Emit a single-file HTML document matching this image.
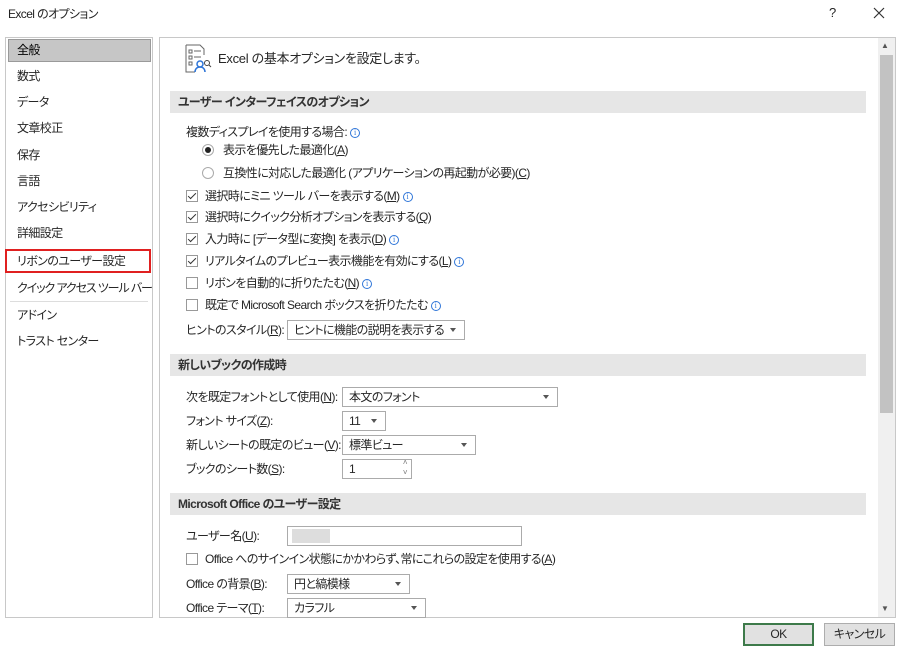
<!DOCTYPE html>
<html><head><meta charset="utf-8"><style>
*{margin:0;padding:0;box-sizing:border-box}
body{width:900px;height:651px;background:#fff;position:relative;overflow:hidden;font-family:"Liberation Sans","Noto Sans CJK JP",sans-serif;font-size:12px;color:#262626;font-feature-settings:"palt" 1;letter-spacing:-0.6px}
.a{position:absolute;white-space:nowrap;line-height:16px}
.box{position:absolute;border:1px solid #ababab;background:#fff}
.hdr{position:absolute;left:170px;width:696px;height:22px;background:#e6e6e6;font-weight:bold;font-size:12px;line-height:22px;padding-left:8px;color:#333}
.cb{position:absolute;width:12px;height:12px;border:1px solid #999;background:#fff}
.cb.c::after{content:"";position:absolute;left:3px;top:0px;width:3px;height:7px;border:solid #333;border-width:0 1.5px 1.5px 0;transform:rotate(45deg)}
.rd{position:absolute;width:12px;height:12px;border:1px solid #aaa;border-radius:50%}
.rd.c::after{content:"";position:absolute;left:2px;top:2px;width:6px;height:6px;border-radius:50%;background:#222}
.i{display:inline-block;width:10px;height:10px;border:1px solid #2e75d8;border-radius:50%;color:#2e75d8;font-size:8px;line-height:8px;text-align:center;margin-left:3px;vertical-align:1px;font-family:"Liberation Serif",serif;letter-spacing:0}
.sel{position:absolute;border:1px solid #ababab;background:#fff;height:20px;line-height:18px;padding-left:6px}
.sel::after{content:"";position:absolute;right:8px;top:7px;border:3.5px solid transparent;border-top:4px solid #555;border-bottom:0}
u{text-decoration:underline}
</style></head><body>
<div class="a" style="left:8px;top:6px;font-size:12px;color:#222">Excel のオプション</div>
<div class="a" style="left:829px;top:5px;font-size:13px">?</div>
<svg style="position:absolute;left:873px;top:7px" width="12" height="12"><path d="M1 1L11 11M11 1L1 11" stroke="#333" stroke-width="1.2"/></svg>

<div class="box" style="left:5px;top:37px;width:148px;height:581px;border-color:#c8c8c8"></div>
<div style="position:absolute;left:8px;top:39px;width:143px;height:23px;background:#c6c6c6;border:1px solid #9a9a9a"></div>
<div class="a" style="left:17px;top:42px;color:#000">全般</div>
<div class="a" style="left:17px;top:68px">数式</div>
<div class="a" style="left:17px;top:94px">データ</div>
<div class="a" style="left:17px;top:120px">文章校正</div>
<div class="a" style="left:17px;top:147px">保存</div>
<div class="a" style="left:17px;top:173px">言語</div>
<div class="a" style="left:17px;top:199px">アクセシビリティ</div>
<div class="a" style="left:17px;top:225px">詳細設定</div>
<div style="position:absolute;left:5px;top:249px;width:146px;height:24px;border:2px solid #e02020"></div>
<div class="a" style="left:17px;top:253px">リボンのユーザー設定</div>
<div class="a" style="left:17px;top:280px;letter-spacing:-1.1px">クイック アクセス ツール バー</div>
<div style="position:absolute;left:10px;top:301px;width:138px;height:1px;background:#ddd"></div>
<div class="a" style="left:17px;top:307px">アドイン</div>
<div class="a" style="left:17px;top:333px">トラスト センター</div>

<div class="box" style="left:159px;top:37px;width:737px;height:581px;border-color:#c8c8c8"></div>
<div style="position:absolute;left:878px;top:38px;width:17px;height:579px;background:#f0f0f0"></div>
<div style="position:absolute;left:880px;top:55px;width:13px;height:358px;background:#c2c2c2"></div>
<div class="a" style="left:881px;top:38px;font-size:8px;color:#555">▲</div>
<div class="a" style="left:881px;top:601px;font-size:8px;color:#555">▼</div>

<svg style="position:absolute;left:184px;top:44px" width="28" height="30" viewBox="0 0 28 30"><path d="M2 1h14l4 4v6M2 1v27h9" fill="none" stroke="#666"/><path d="M5 6h3v3H5zM5 12h3v3H5zM5 18h3v3H5z" fill="none" stroke="#666"/><path d="M10 7h7M10 13h7" stroke="#666"/><circle cx="16" cy="20" r="3" fill="none" stroke="#2e75d8" stroke-width="1.5"/><path d="M11 28c0-3 2-5 5-5s5 2 5 5" fill="none" stroke="#2e75d8" stroke-width="1.5"/><circle cx="23" cy="19" r="2.5" fill="none" stroke="#444"/><path d="M25 21l2 2" stroke="#444"/></svg>
<div class="a" style="left:218px;top:51px;font-size:13px;letter-spacing:-0.3px">Excel の基本オプションを設定します。</div>

<div class="hdr" style="top:91px">ユーザー インターフェイスのオプション</div>
<div class="a" style="left:186px;top:124px">複数ディスプレイを使用する場合:<span class="i">i</span></div>
<div class="rd c" style="left:202px;top:144px"></div>
<div class="a" style="left:223px;top:142px">表示を優先した最適化(<u>A</u>)</div>
<div class="rd" style="left:202px;top:167px"></div>
<div class="a" style="left:223px;top:165px">互換性に対応した最適化 (アプリケーションの再起動が必要)(<u>C</u>)</div>
<div class="cb c" style="left:186px;top:190px"></div>
<div class="a" style="left:205px;top:188px">選択時にミニ ツール バーを表示する(<u>M</u>)<span class="i">i</span></div>
<div class="cb c" style="left:186px;top:211px"></div>
<div class="a" style="left:205px;top:209px">選択時にクイック分析オプションを表示する(<u>Q</u>)</div>
<div class="cb c" style="left:186px;top:233px"></div>
<div class="a" style="left:205px;top:231px">入力時に [データ型に変換] を表示(<u>D</u>)<span class="i">i</span></div>
<div class="cb c" style="left:186px;top:255px"></div>
<div class="a" style="left:205px;top:253px">リアルタイムのプレビュー表示機能を有効にする(<u>L</u>)<span class="i">i</span></div>
<div class="cb" style="left:186px;top:277px"></div>
<div class="a" style="left:205px;top:275px">リボンを自動的に折りたたむ(<u>N</u>)<span class="i">i</span></div>
<div class="cb" style="left:186px;top:299px"></div>
<div class="a" style="left:205px;top:297px">既定で Microsoft Search ボックスを折りたたむ<span class="i">i</span></div>
<div class="a" style="left:186px;top:322px">ヒントのスタイル(<u>R</u>):</div>
<div class="sel" style="left:287px;top:320px;width:178px">ヒントに機能の説明を表示する</div>

<div class="hdr" style="top:354px">新しいブックの作成時</div>
<div class="a" style="left:186px;top:389px">次を既定フォントとして使用(<u>N</u>):</div>
<div class="sel" style="left:342px;top:387px;width:216px">本文のフォント</div>
<div class="a" style="left:186px;top:413px">フォント サイズ(<u>Z</u>):</div>
<div class="sel" style="left:342px;top:411px;width:44px">11</div>
<div class="a" style="left:186px;top:437px">新しいシートの既定のビュー(<u>V</u>):</div>
<div class="sel" style="left:342px;top:435px;width:134px">標準ビュー</div>
<div class="a" style="left:186px;top:461px">ブックのシート数(<u>S</u>):</div>
<div class="box" style="left:342px;top:459px;width:70px;height:20px;line-height:18px;padding-left:6px">1<span style="position:absolute;right:4px;top:-2px;font-size:8px;line-height:10px;color:#777">˄<br>˅</span></div>

<div class="hdr" style="top:493px">Microsoft Office のユーザー設定</div>
<div class="a" style="left:186px;top:528px">ユーザー名(<u>U</u>):</div>
<div class="box" style="left:287px;top:526px;width:235px;height:20px"><div style="position:absolute;left:4px;top:2px;width:38px;height:14px;background:#ddd"></div></div>
<div class="cb" style="left:186px;top:553px"></div>
<div class="a" style="left:205px;top:551px">Office へのサインイン状態にかかわらず、常にこれらの設定を使用する(<u>A</u>)</div>
<div class="a" style="left:186px;top:576px">Office の背景(<u>B</u>):</div>
<div class="sel" style="left:287px;top:574px;width:123px">円と縞模様</div>
<div class="a" style="left:186px;top:600px">Office テーマ(<u>T</u>):</div>
<div class="sel" style="left:287px;top:598px;width:139px">カラフル</div>

<div style="position:absolute;left:743px;top:623px;width:71px;height:23px;border:2px solid #3d7a4a;background:#e1e1e1;text-align:center;line-height:19px">OK</div>
<div style="position:absolute;left:824px;top:623px;width:71px;height:23px;border:1px solid #adadad;background:#e1e1e1;text-align:center;line-height:21px">キャンセル</div>
</body></html>
